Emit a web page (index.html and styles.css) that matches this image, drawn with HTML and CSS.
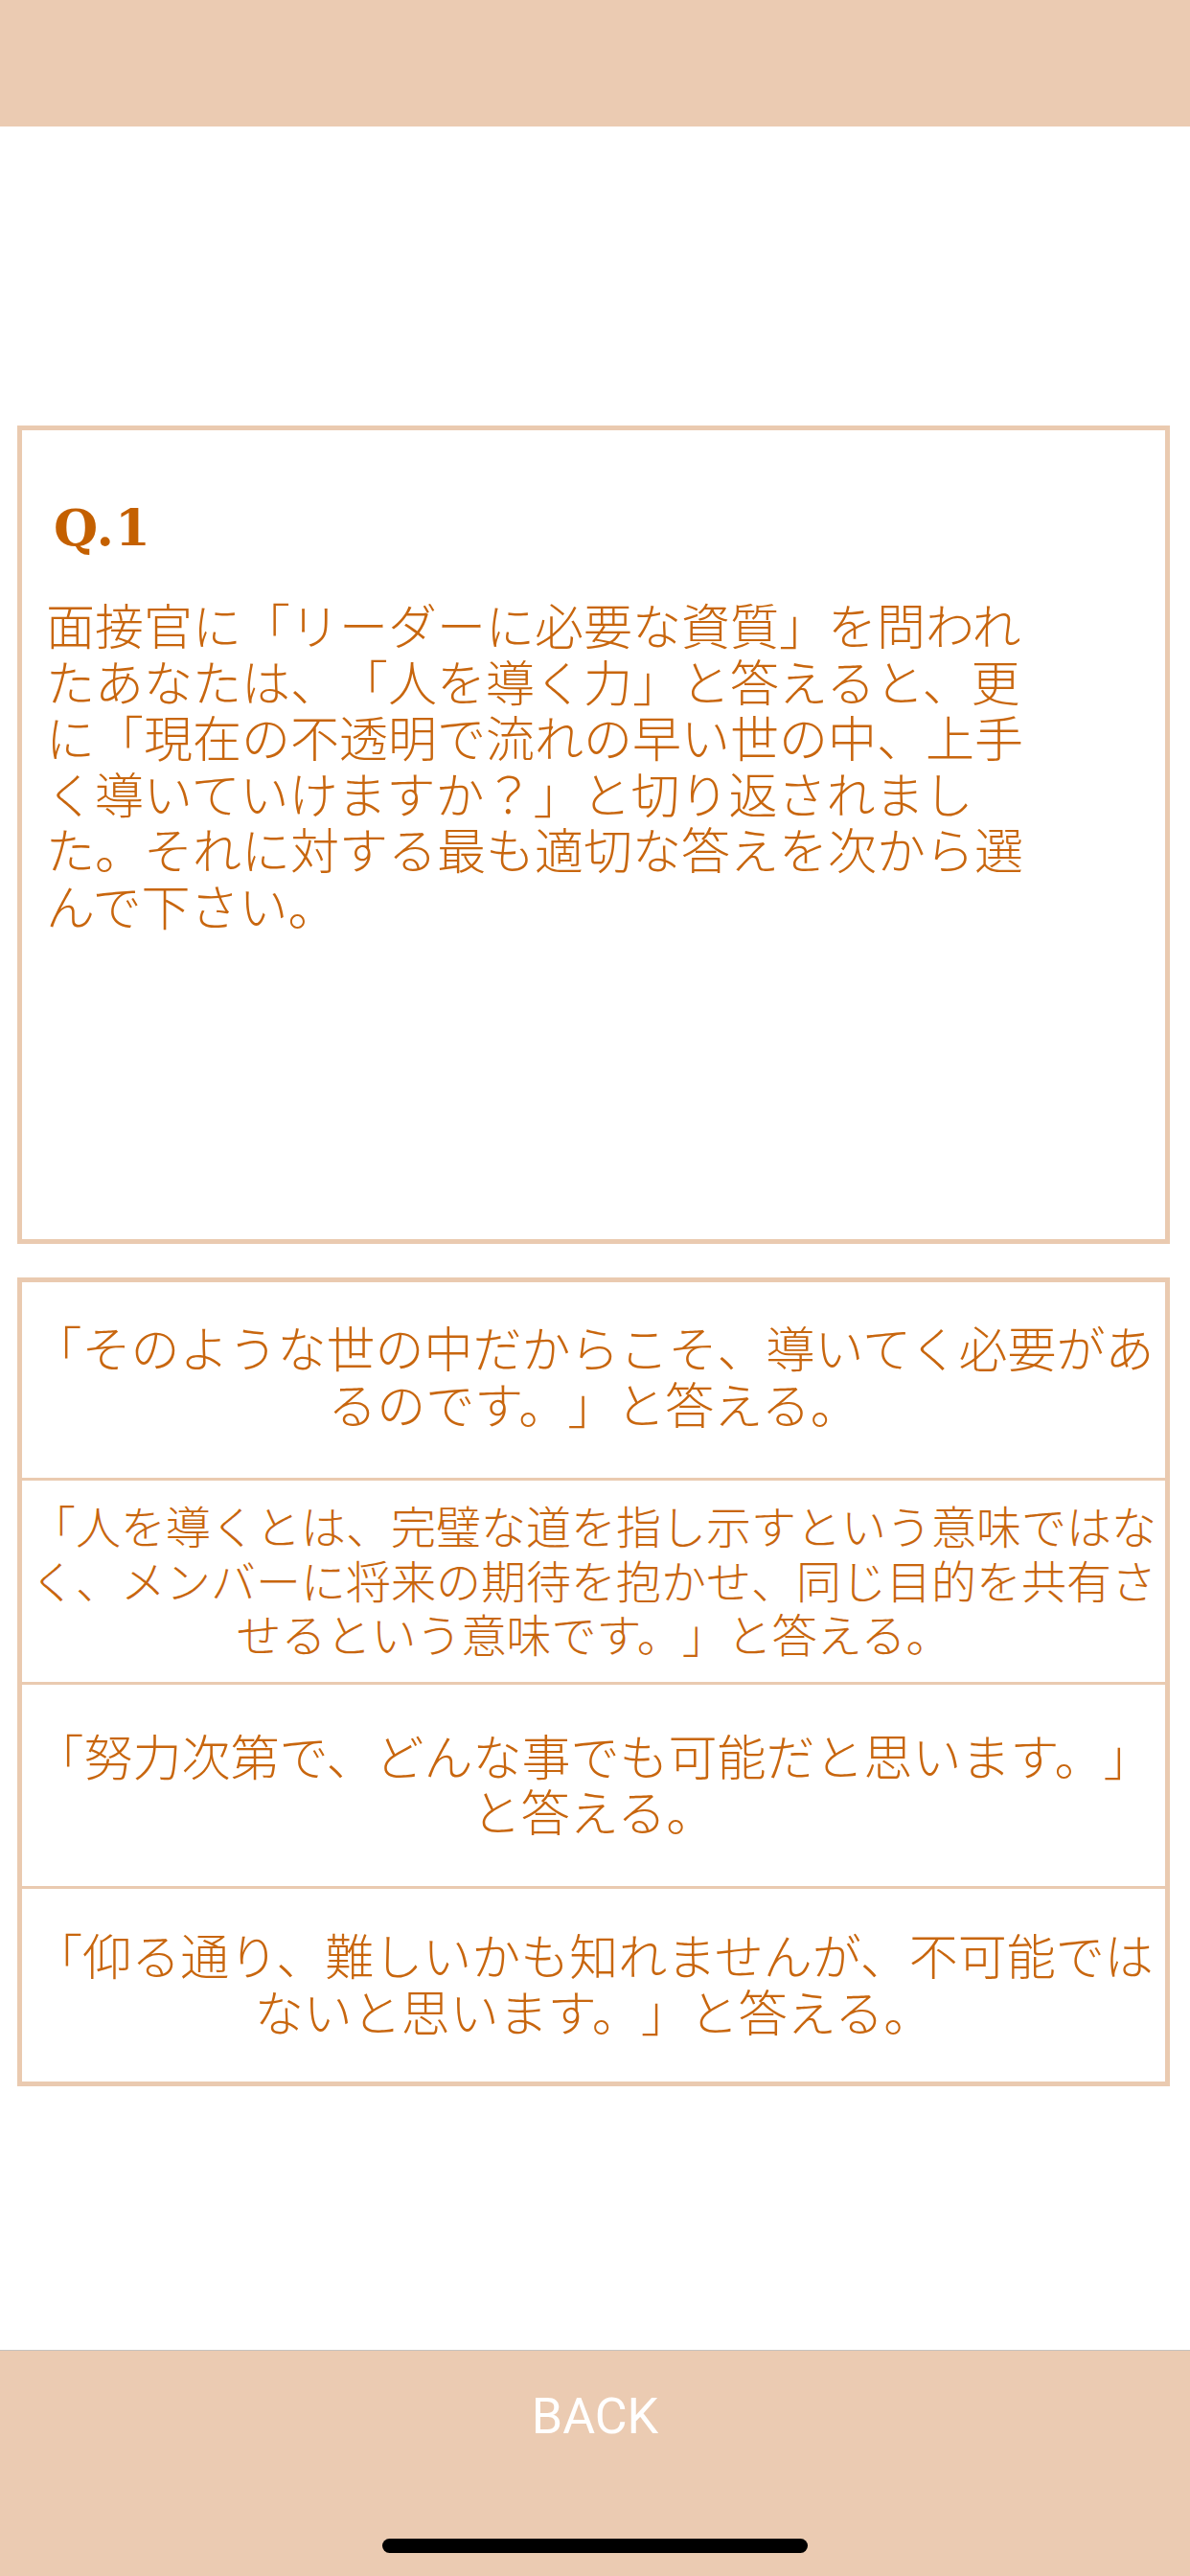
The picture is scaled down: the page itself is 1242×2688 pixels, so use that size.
FILE: index.html
```html
<!DOCTYPE html>
<html lang="ja">
<head>
<meta charset="utf-8">
<title>Q.1</title>
<link rel="stylesheet" href="styles.css">
</head>
<body>
<div class="page">
  <header class="topbar"></header>
  <main class="main">
    <section class="question">
      <h1 class="qnum">Q.1</h1>
      <p class="qtext">面接官に「リーダーに必要な資質」を問われたあなたは、「人を導く力」と答えると、更に「現在の不透明で流れの早い世の中、上手く導いていけますか？」と切り返されました。それに対する最も適切な答えを次から選んで下さい。</p>
    </section>
    <section class="answers">
      <div class="answer short first"><p>「そのような世の中だからこそ、導いてく必要があるのです。」と答える。</p></div>
      <div class="answer tall small"><p>「人を導くとは、完璧な道を指し示すという意味ではなく、メンバーに将来の期待を抱かせ、同じ目的を共有させるという意味です。」と答える。</p></div>
      <div class="answer tall third"><p>「努力次第で、どんな事でも可能だと思います。」と答える。</p></div>
      <div class="answer short last"><p>「仰る通り、難しいかも知れませんが、不可能ではないと思います。」と答える。</p></div>
    </section>
  </main>
  <footer class="bottombar">
    <div class="back">BACK</div>
    <div class="home-indicator"></div>
  </footer>
</div>
</body>
</html>
```

FILE: styles.css
```css
* { box-sizing: border-box; }
html, body { margin: 0; padding: 0; background: #ffffff; }
.page {
  width: 1242px;
  height: 2688px;
  display: flex;
  flex-direction: column;
  overflow: hidden;
}
.topbar {
  height: 132px;
  background: #ebcbb2;
  flex: none;
}
.main {
  flex: 1;
  display: flex;
  flex-direction: column;
  padding-left: 18px;
}
.question {
  margin-top: 312px;
  width: 1203px;
  height: 854px;
  border: 5px solid #eacab0;
  padding: 71px 0 0 25px;
}
.qnum {
  margin: 0 0 0 8px;
  font-family: "DejaVu Serif", serif;
  font-weight: bold;
  font-size: 53px;
  line-height: 60px;
  letter-spacing: 1px;
  color: #c46000;
}
.qtext {
  margin: 42px 0 0 0;
  width: 1045px;
  font-family: "Noto Sans CJK JP", sans-serif;
  font-weight: 300;
  font-size: 51px;
  line-height: 58.5px;
  color: #c8660e;
  text-spacing-trim: space-all;
  line-break: strict;
}
.answers {
  margin-top: 35px;
  width: 1203px;
  border: 5px solid #eacab0;
  display: flex;
  flex-direction: column;
}
.answer {
  display: flex;
  align-items: center;
  justify-content: center;
  border-top: 3px solid #eacab0;
}
.answer.first { border-top: none; padding-bottom: 11px; }
.answer.short { height: 204px; }
.answer.tall { height: 213px; }
.answer.small { padding-bottom: 4px; }
.answer.third { padding-bottom: 6px; }
.answer.last { padding-bottom: 6px; }
.answer p {
  margin: 0;
  width: 100%;
  text-align: center;
  font-family: "Noto Sans CJK JP", sans-serif;
  font-weight: 300;
  font-size: 51px;
  line-height: 58.5px;
  color: #c8660e;
  text-spacing-trim: space-all;
  line-break: strict;
}
.answer.small p {
  font-size: 47px;
  line-height: 56.5px;
}
.bottombar {
  flex: none;
  height: 236px;
  background: #ebcbb2;
  border-top: 1px solid #c6c3c0;
  display: flex;
  flex-direction: column;
  align-items: center;
  padding-top: 39px;
}
.back {
  font-family: Roboto, "Liberation Sans", sans-serif;
  font-size: 52px;
  line-height: 60px;
  color: #ffffff;
}
.home-indicator {
  margin-top: 97px;
  width: 444px;
  height: 15px;
  border-radius: 8px;
  background: #000000;
}
```
